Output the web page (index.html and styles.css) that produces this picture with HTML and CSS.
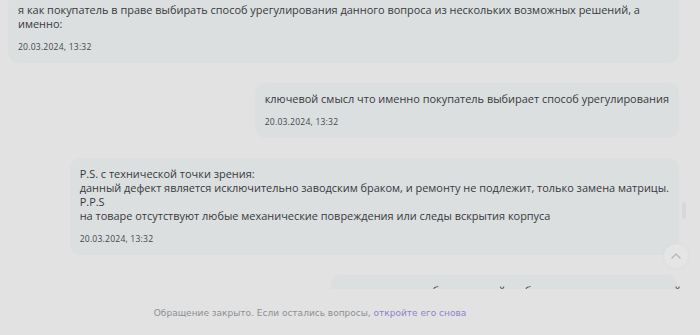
FILE: index.html
```html
<!DOCTYPE html>
<html lang="ru">
<head>
<meta charset="utf-8">
<link rel="stylesheet" href="styles.css">
</head>
<body>
<div class="page">
  <div class="chat">
    <div class="scroll">
      <div class="list">
        <div class="bubble wide">
          <p class="text">я как покупатель в праве выбирать способ урегулирования данного вопроса из нескольких возможных решений, а<br>именно:</p>
          <div class="date">20.03.2024, 13:32</div>
        </div>
        <div class="bubble">
          <p class="text">ключевой смысл что именно покупатель выбирает способ урегулирования</p>
          <div class="date">20.03.2024, 13:32</div>
        </div>
        <div class="bubble">
          <p class="text">P.S. с технической точки зрения:<br>данный дефект является исключительно заводским браком, и ремонту не подлежит, только замена матрицы.<br>P.P.S<br>на товаре отсутствуют любые механические повреждения или следы вскрытия корпуса</p>
          <div class="date">20.03.2024, 13:32</div>
        </div>
        <div class="bubble next">
          <p class="text">в данном случае бракованный и обменять его нужно на новый</p>
          <div class="date">20.03.2024, 13:32</div>
        </div>
      </div>
    </div>
    <div class="scrollbar"><div class="thumb"></div></div>
    <button class="to-top" type="button" aria-label="Наверх">
      <svg width="10" height="6" viewBox="0 0 10 6"><path d="M1 5 L5 1 L9 5" fill="none" stroke="#b4b6b8" stroke-width="1.2" stroke-linecap="round" stroke-linejoin="round"/></svg>
    </button>
  </div>
  <footer class="closed">
    <p class="closed-text">Обращение закрыто. Если остались вопросы, <a class="reopen" href="#">откройте его снова</a></p>
  </footer>
</div>
</body>
</html>
```

FILE: styles.css
```css
* { box-sizing: border-box; }
html, body { margin: 0; padding: 0; }
body {
  background: #e2e2e2;
  width: 700px;
  height: 335px;
  overflow: hidden;
  font-family: "Open Sans", "Liberation Sans", sans-serif;
}
.page {
  display: flex;
  flex-direction: column;
  height: 335px;
}
.chat {
  position: relative;
  display: flex;
  height: 289px;
  overflow: hidden;
}
.scroll {
  flex: 1;
  padding-left: 8px;
}
.list {
  margin-top: -6px;
  display: flex;
  flex-direction: column;
  align-items: flex-end;
  gap: 20px;
}
.bubble {
  background: #dcdfe0;
  border-radius: 10px;
  padding: 9px 10px 10px;
  max-width: 671px;
}
.bubble.wide { width: 671px; }
.bubble.next { width: 346px; margin-right: 2px; }
.text {
  margin: 0;
  font-size: 10.95px;
  line-height: 14px;
  color: #37393d;
  white-space: nowrap;
}
.date {
  margin-top: 10px;
  font-size: 8.6px;
  line-height: 12px;
  letter-spacing: 0.2px;
  color: #46484c;
}
.scrollbar {
  width: 21px;
  padding: 202px 0 0 3px;
}
.thumb {
  width: 4px;
  height: 17px;
  border-radius: 2px;
  background: #d6d7d8;
}
.to-top {
  position: absolute;
  left: 664px;
  top: 244px;
  width: 24px;
  height: 24px;
  border-radius: 50%;
  border: none;
  padding: 0;
  background: #e5e5e5;
  box-shadow: 0 0 3px rgba(0,0,0,0.04);
  display: flex;
  align-items: center;
  justify-content: center;
}
.closed {
  flex: 1;
  padding: 18px 80px 0 0;
}
.closed-text {
  margin: 0;
  text-align: center;
  font-family: "DejaVu Sans", Verdana, sans-serif;
  font-size: 9px;
  line-height: 12px;
  color: #8b9095;
}
.reopen {
  color: #8d82c8;
  text-decoration: none;
}
```
